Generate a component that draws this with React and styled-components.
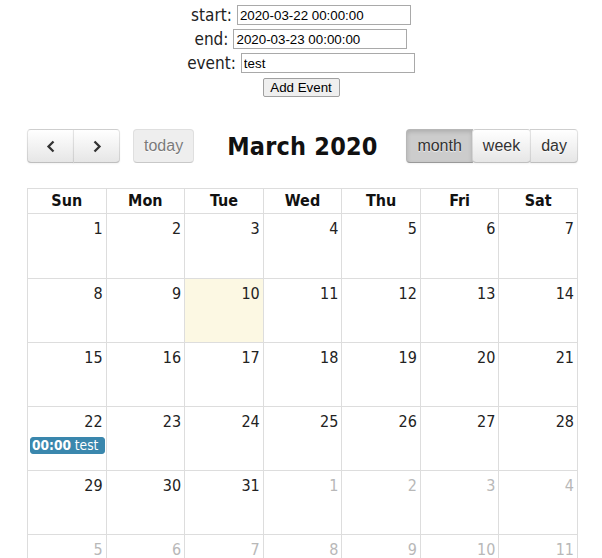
import React from "react";
import styled, { createGlobalStyle, css } from "styled-components";

const GlobalStyle = createGlobalStyle`
  body {
    margin: 0;
    background: #fff;
    font-family: "DejaVu Sans Condensed", "DejaVu Sans", sans-serif;
    font-stretch: condensed;
    color: #222;
  }
  * { box-sizing: border-box; }
`;

const Form = styled.div`
  display: flex;
  flex-direction: column;
  align-items: center;
  gap: 4px;
  padding-top: 5px;
`;

const FieldRow = styled.div`
  display: flex;
  align-items: center;
  gap: 5px;
  height: 20px;
`;

const Label = styled.span`
  font-size: 17px;
  color: #222;
`;

const Input = styled.input`
  width: 174px;
  height: 20px;
  padding: 1px 2px;
  border: 1px solid #a9a9a9;
  font-family: "Liberation Sans", Arial, sans-serif;
  font-size: 13.33px;
  color: #000;
  outline: none;
`;

const AddButton = styled.button`
  margin-top: 1px;
  height: 19px;
  width: 77px;
  padding: 0;
  border: 1px solid #a0a0a0;
  border-radius: 2px;
  background: #efefef;
  font-family: "Liberation Sans", Arial, sans-serif;
  font-size: 13.33px;
  color: #000;
`;

const Calendar = styled.div`
  width: 551px;
  margin: 32px 0 0 27px;
`;

const Toolbar = styled.div`
  display: grid;
  grid-template-columns: 1fr auto 1fr;
  align-items: center;
  margin-bottom: 25px;
`;

const Side = styled.div`
  display: flex;
  align-items: center;
  gap: 13px;
  justify-content: ${(p) => (p.$right ? "flex-end" : "flex-start")};
`;

const Group = styled.div`
  display: flex;
  & > button:not(:first-child) { margin-left: -1px; }
  & > button:first-child { border-radius: 4px 0 0 4px; }
  & > button:last-child { border-radius: 0 4px 4px 0; }
`;

const FcButton = styled.button`
  height: 34px;
  padding: 0 10px;
  min-width: ${(p) => p.$w || "auto"};
  display: flex;
  align-items: center;
  justify-content: center;
  border: 1px solid;
  border-color: rgba(0, 0, 0, 0.1) rgba(0, 0, 0, 0.1) rgba(0, 0, 0, 0.25);
  border-radius: 4px;
  background-color: #f5f5f5;
  background-image: linear-gradient(to bottom, #fff, #e6e6e6);
  color: #333;
  font-family: "Liberation Sans", Arial, sans-serif;
  font-size: 16px;
  text-shadow: 0 1px 1px rgba(255, 255, 255, 0.75);
  box-shadow: inset 0 1px 0 rgba(255, 255, 255, 0.2), 0 1px 2px rgba(0, 0, 0, 0.05);
  ${(p) =>
    p.$active &&
    css`
      background-color: #ccc;
      background-image: none;
      box-shadow: inset 0 2px 4px rgba(0, 0, 0, 0.15), 0 1px 2px rgba(0, 0, 0, 0.05);
    `}
  ${(p) =>
    p.$disabled &&
    css`
      background-color: #e6e6e6;
      background-image: none;
      box-shadow: none;
      opacity: 0.65;
    `}
`;

const Title = styled.h2`
  margin: 0;
  font-size: 25px;
  font-weight: bold;
  color: #111;
  letter-spacing: 0.2px;
`;

const Grid = styled.div`
  display: grid;
  grid-template-columns: repeat(7, 1fr);
  grid-template-rows: 25px 65px repeat(5, 64px);
  border-top: 1px solid #ddd;
  border-left: 1px solid #ddd;
`;

const HeadCell = styled.div`
  border-right: 1px solid #ddd;
  border-bottom: 1px solid #ddd;
  text-align: center;
  font-weight: bold;
  font-size: 16px;
  line-height: 23px;
  color: #111;
`;

const DayCell = styled.div`
  min-width: 0;
  overflow: hidden;
  border-right: 1px solid #ddd;
  border-bottom: 1px solid #ddd;
  background: ${(p) => (p.$today ? "#fcf8e3" : "#fff")};
`;

const DayNumber = styled.div`
  text-align: right;
  padding: 2px 3px 0 2px;
  font-size: 16px;
  line-height: 26px;
  color: ${(p) => (p.$other ? "#b8b8b8" : "#222")};
`;

const Event = styled.div`
  margin: 2px 1px 0 2px;
  padding: 0 1px;
  border: 1px solid #3a87ad;
  border-radius: 3px;
  background: #3a87ad;
  color: #fff;
  font-size: 13.6px;
  line-height: 15px;
  white-space: nowrap;
  overflow: hidden;
  b { font-weight: bold; }
`;

const Chevron = ({ left }) => (
  <svg width="10" height="13" viewBox="0 0 10 13">
    <path
      d={left ? "M7.5 1.5 L2.5 6.5 L7.5 11.5" : "M2.5 1.5 L7.5 6.5 L2.5 11.5"}
      fill="none"
      stroke="#333"
      strokeWidth="2.3"
    />
  </svg>
);

const days = ["Sun", "Mon", "Tue", "Wed", "Thu", "Fri", "Sat"];

const cells = [];
for (let i = 0; i < 42; i++) {
  if (i < 31) cells.push({ n: i + 1, other: false });
  else cells.push({ n: i - 30, other: true });
}

export default function App() {
  return (
    <>
      <GlobalStyle />
      <Form>
        <FieldRow>
          <Label>start:</Label>
          <Input defaultValue="2020-03-22 00:00:00" />
        </FieldRow>
        <FieldRow>
          <Label>end:</Label>
          <Input defaultValue="2020-03-23 00:00:00" />
        </FieldRow>
        <FieldRow>
          <Label>event:</Label>
          <Input defaultValue="test" />
        </FieldRow>
        <AddButton>Add Event</AddButton>
      </Form>
      <Calendar>
        <Toolbar>
          <Side>
            <Group>
              <FcButton $w="47px">
                <Chevron left />
              </FcButton>
              <FcButton $w="47px">
                <Chevron />
              </FcButton>
            </Group>
            <FcButton $disabled>today</FcButton>
          </Side>
          <Title>March 2020</Title>
          <Side $right>
            <Group>
              <FcButton $active>month</FcButton>
              <FcButton>week</FcButton>
              <FcButton>day</FcButton>
            </Group>
          </Side>
        </Toolbar>
        <Grid>
          {days.map((d) => (
            <HeadCell key={d}>{d}</HeadCell>
          ))}
          {cells.map((c, i) => (
            <DayCell key={i} $today={!c.other && c.n === 10}>
              <DayNumber $other={c.other}>{c.n}</DayNumber>
              {!c.other && c.n === 22 && (
                <Event>
                  <b>00:00</b> test
                </Event>
              )}
            </DayCell>
          ))}
        </Grid>
      </Calendar>
    </>
  );
}
